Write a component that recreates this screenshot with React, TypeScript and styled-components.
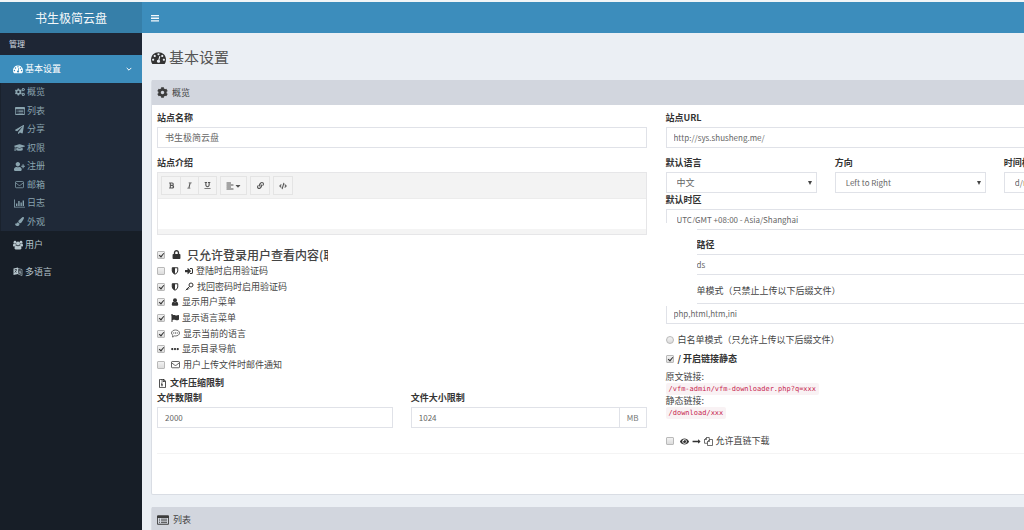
import React from 'react';
import styled, { createGlobalStyle, css } from 'styled-components';
import {
  FaAlignLeft, FaBold, FaCaretDown, FaCode, FaCog, FaCogs, FaEllipsisH, FaEye, FaFlag,
  FaGraduationCap, FaItalic, FaLink, FaLock, FaLongArrowAltRight, FaPaintBrush, FaPaperPlane,
  FaRegFileArchive, FaSignInAlt, FaUnderline, FaUserPlus,
} from 'react-icons/fa';

const Global = createGlobalStyle`
  *, *::before, *::after { box-sizing: border-box; }
  body {
    margin: 0;
    overflow-x: hidden;
    background: #ebeff4;
    color: #444;
    font-family: "Noto Sans CJK SC", "Noto Sans", sans-serif;
    font-size: 9px;
    line-height: 14px;
  }
  input, select, button { font: inherit; color: inherit; margin: 0; }
  svg { flex: none; display: block; }
`;

const Page = styled.div`
  display: grid;
  grid-template-columns: 142px minmax(0, 1fr);
  grid-template-rows: 31px 1fr;
  min-height: 100vh;
  overflow: hidden;
  border-top: 2px solid #f1f5f7;
`;

const Logo = styled.a`
  display: flex;
  align-items: center;
  justify-content: center;
  background: #367fa9;
  color: #f4f8fa;
  font-size: 12px;
  text-decoration: none;
`;

const TopBar = styled.header`
  display: flex;
  align-items: center;
  padding-left: 9px;
  background: #3c8dbc;
`;

const BarButton = styled.button`
  border: 0;
  padding: 0;
  background: none;
  color: #f4f9fc;
`;

const Sidebar = styled.aside`
  background: #171e27;
  color: #b8c7ce;
`;

const Section = styled.div`
  padding: 4px 9px 4px;
  background: #1e2635;
  color: #d2dae0;
  font-size: 8px;
`;

const NavItem = styled.a<{ $active?: boolean }>`
  display: flex;
  align-items: center;
  gap: 2px;
  height: 27px;
  padding: 0 10px 0 13px;
  color: inherit;
  text-decoration: none;
  ${(p) => p.$active && css`
    height: 28px;
    background: #3c8dbc;
    color: #fff;
    & > :last-child { margin-left: auto; }
  `}
`;

const SubMenu = styled.nav`
  display: grid;
  grid-auto-rows: 1fr;
  min-height: 148px;
  border-left: 1px solid #1a222d;
  background: #1f2938;
`;

const SubItem = styled.a`
  display: flex;
  align-items: center;
  padding-left: 13px;
  color: #8aa4af;
  text-decoration: none;
`;

const IconSlot = styled.span`
  display: flex;
  justify-content: center;
  width: 11px;
  margin-right: 2px;
`;

const Main = styled.main`
  padding: 14px 0 0 9px;
  margin-right: -139px;
`;

const Title = styled.h1`
  display: flex;
  align-items: center;
  gap: 3px;
  margin: 0 0 13px;
  font-size: 15px;
  font-weight: 400;
  line-height: 20px;
  color: #555;
  & svg { color: #333; }
`;

const Box = styled.section`
  margin-bottom: 12px;
  border: 1px solid #d9dde4;
  border-top: 0;
  border-radius: 2px;
  background: #fff;
`;

const BoxHead = styled.h2`
  display: flex;
  align-items: center;
  gap: 4px;
  height: 25px;
  margin: 0;
  padding-left: 5px;
  background: #d2d6de;
  font-size: 9px;
  font-weight: 400;
  & svg { color: #3c3c3c; }
`;

const Columns = styled.div`
  display: grid;
  grid-template-columns: 1fr 1fr;
  gap: 19px;
  margin: 0 7px 0 5px;
  padding-top: 6px;
  min-height: 349px;
  border-bottom: 1px solid #f4f4f4;
`;

const BoxFoot = styled.div`
  height: 40px;
`;

const Column = styled.div`
  position: relative;
`;

const Split = styled.div<{ $count: number }>`
  display: grid;
  grid-template-columns: repeat(${(p) => p.$count}, minmax(0, 1fr));
  gap: 18px;
`;

const Group = styled.div<{ $tight?: boolean }>`
  margin-bottom: ${(p) => (p.$tight ? 0 : 8)}px;
`;

const Label = styled.label<{ $inset?: boolean }>`
  display: block;
  margin-bottom: 2px;
  padding-left: ${(p) => (p.$inset ? 31 : 0)}px;
  color: #333;
  font-weight: 700;
`;

const field = css<{ $cjk?: boolean }>`
  display: block;
  width: 100%;
  height: 21px;
  border: 1px solid #e0e2e8;
  border-radius: 0;
  background-color: #fff;
  color: #666;
  outline: 0;
  font-size: ${(p) => (p.$cjk ? 9 : 8)}px;
`;

const Input = styled.input<{ $inset?: boolean; $cjk?: boolean }>`
  ${field}
  padding: 0 7px 0 ${(p) => (p.$inset ? 30 : 7)}px;
`;

const Select = styled.select<{ $cjk?: boolean }>`
  ${field}
  appearance: none;
  padding: 0 12px 0 10px;
  background-image: url("data:image/svg+xml,%3Csvg xmlns='http://www.w3.org/2000/svg' width='4' height='4'%3E%3Cpath d='M0 0h4L2 4z' fill='%23444'/%3E%3C/svg%3E");
  background-repeat: no-repeat;
  background-position: right 4px center;
`;

const AddonRow = styled.div`
  display: flex;
`;

const Addon = styled.span`
  display: flex;
  align-items: center;
  padding: 0 7px;
  border: 1px solid #e0e2e8;
  border-left: 0;
  color: #777;
  font-size: 8px;
`;

const Editor = styled.div`
  height: 63px;
  margin-bottom: 12px;
  display: flex;
  flex-direction: column;
  border: 1px solid #e6e6e8;
`;

const Tools = styled.div`
  display: flex;
  gap: 3px;
  padding: 3px;
  border-bottom: 1px solid #ececec;
  background: #f3f3f3;
`;

const ToolGroup = styled.div`
  display: flex;
  border: 1px solid #e4e4e4;
`;

const Tool = styled.button<{ $wide?: boolean }>`
  display: flex;
  align-items: center;
  justify-content: center;
  width: ${(p) => (p.$wide ? 25 : 18)}px;
  height: 17px;
  padding: 0;
  border: 0;
  background: #f4f4f4;
  color: #555;
  & + & { border-left: 1px solid #e4e4e4; }
`;

const EditArea = styled.div`
  flex: 1;
  outline: 0;
`;

const StatusBar = styled.div`
  height: 5px;
  background: #f4f4f4;
`;

const Options = styled.div`
  display: flex;
  flex-direction: column;
  justify-content: space-between;
  min-height: 108px;
  margin: 2px 0 4px;
`;

const Option = styled.label<{ $gap?: number; $bold?: boolean }>`
  display: flex;
  align-items: center;
  gap: 3px;
  line-height: 14px;
  color: ${(p) => (p.$bold ? '#333' : '#444')};
  font-weight: ${(p) => (p.$bold ? 700 : 400)};
  & > input { margin-right: ${(p) => p.$gap ?? 3}px; }
  & > svg { color: #333; }
`;

const Lead = styled(Option)`
  gap: 6px;
  height: 15px;
  font-size: 12px;
  font-weight: 500;
  color: #444;
`;

const LeadText = styled.span`
  width: 141px;
  overflow: hidden;
  white-space: nowrap;
`;

const Check = styled.input`
  appearance: none;
  flex: none;
  position: relative;
  width: 8px;
  height: 8px;
  border: 1px solid #b9b9b9;
  border-radius: ${(p) => (p.type === 'radio' ? 4 : 1)}px;
  background: linear-gradient(#f2f2f2, #dcdcdc);
  &:checked::after {
    content: '';
    position: absolute;
    left: 2px;
    top: 0;
    width: 3px;
    height: 5px;
    border: solid #333;
    border-width: 0 1px 1px 0;
    transform: rotate(40deg);
  }
`;

const ModeRow = styled(Option)<{ $inset?: boolean }>`
  margin: 9px 0 5px;
  padding-left: ${(p) => (p.$inset ? 31 : 0)}px;
`;

const StaticRow = styled(Option)`
  margin: 4px 0 5px;
`;

const Line = styled.div`
  line-height: 12px;
`;

const Code = styled.code`
  display: inline-block;
  vertical-align: top;
  padding: 0 3px;
  border-radius: 2px;
  background: #f9f2f4;
  color: #c7254e;
  font-family: "DejaVu Sans Mono", monospace;
  font-size: 7px;
  line-height: 12px;
`;

const SubHead = styled.div`
  display: flex;
  align-items: center;
  gap: 3px;
  padding-left: 1px;
  margin-bottom: 1px;
  color: #333;
  font-weight: 700;
`;

const Mask = styled.div`
  position: absolute;
  left: 0;
  top: 112px;
  width: 31px;
  height: 83px;
  background: #fff;
`;

const DirectRow = styled(Option)`
  margin-top: 15px;
`;

type IconProps = { size?: number };

const DashboardIcon = ({ size = 10 }: IconProps) => (
  <svg width={size} height={size} viewBox="0 0 1792 1792" fill="currentColor" aria-hidden="true">
    <path d="M384 1152q0-53-37.500-90.500t-90.500-37.500-90.500 37.500-37.500 90.500 37.500 90.500 90.500 37.500 90.500-37.500 37.500-90.500zm192-448q0-53-37.500-90.500t-90.500-37.500-90.500 37.500-37.500 90.500 37.500 90.500 90.500 37.500 90.500-37.500 37.500-90.500zm428 481l101-382q6-26-7.500-48.500t-38.500-29.500-48 6.500-30 39.500l-101 382q-60 5-107 43.500t-63 98.500q-20 77 20 146t117 89 146-20 89-117q16-60-6-117t-72-91zm660-33q0-53-37.500-90.500t-90.500-37.500-90.500 37.500-37.500 90.500 37.500 90.500 90.500 37.500 90.500-37.500 37.500-90.500zm-640-640q0-53-37.500-90.500t-90.500-37.500-90.500 37.500-37.500 90.500 37.500 90.500 90.500 37.500 90.500-37.500 37.500-90.500zm448 192q0-53-37.500-90.500t-90.500-37.500-90.500 37.500-37.500 90.500 37.500 90.500 90.500 37.500 90.500-37.500 37.500-90.500zm320 448q0 261-141 483-19 29-54 29h-1402q-35 0-54-29-141-221-141-483 0-182 71-348t191-286 286-191 348-71 348 71 286 191 191 286 71 348z" />
  </svg>
);

const ListIcon = ({ size = 10 }: IconProps) => (
  <svg width={size} height={size} viewBox="0 0 18 16" fill="currentColor" aria-hidden="true">
    <path fillRule="evenodd" d="M1.500 1h15A1.500 1.500 0 0 1 18 2.500v11a1.500 1.500 0 0 1-1.500 1.500h-15A1.500 1.500 0 0 1 0 13.500v-11A1.500 1.500 0 0 1 1.500 1zM1.300 5v8.500h15.400V5z" />
    <path d="M3 6h1.500v1.300H3zM6 6h9v1.300H6zM3 8.600h1.500v1.300H3zM6 8.600h9v1.300H6zM3 11.200h1.500v1.300H3zM6 11.200h9v1.300H6z" />
  </svg>
);

const BarsIcon = () => (
  <svg width="8" height="8" viewBox="0 0 8 8" fill="currentColor" aria-hidden="true">
    <path d="M0 1h8v1.300H0zM0 3.600h8v1.300H0zM0 6.200h8v1.300H0z" />
  </svg>
);

const ChevronIcon = () => (
  <svg width="6" height="6" viewBox="0 0 6 6" fill="none" stroke="currentColor" aria-hidden="true">
    <path d="M.7 1.900L3 4.200l2.300-2.300" />
  </svg>
);

const ChartIcon = () => (
  <svg width="11" height="9" viewBox="0 0 22 18" fill="currentColor" aria-hidden="true">
    <path d="M0 1h1.600v14.400H22V17H0zM4 9h2.700v5H4zM8.500 4h2.700v10H8.500zM13 7h2.700v7H13zM17.300 3H20v11h-2.700z" />
  </svg>
);

const MailIcon = () => (
  <svg width="9" height="9" viewBox="0 0 18 18" fill="none" stroke="currentColor" strokeWidth="1.500" aria-hidden="true">
    <rect x="1" y="3" width="16" height="12.500" rx="1.500" />
    <path d="M1.300 5.500l6 4.800q1.700 1.300 3.400 0l6-4.800" />
  </svg>
);

const UsersIcon = () => (
  <svg width="10" height="10" viewBox="0 0 20 20" fill="currentColor" aria-hidden="true">
    <circle cx="4" cy="4.500" r="2.800" />
    <circle cx="16" cy="4.500" r="2.800" />
    <circle cx="10" cy="7" r="3.900" />
    <path d="M0 11.500Q0 7 1.800 7q2 1.200 3.600.700 0 2.200 1.200 3.500-2 .1-3.200 1.600H1.500Q0 12.800 0 11.500zM20 11.500Q20 7 18.200 7q-2 1.200-3.600.700 0 2.200-1.200 3.500 2 .1 3.200 1.600h1.900q1.500 0 1.500-1.300z" />
    <path d="M3 16.500q0-5.500 3.300-5.500 3.700 2.500 7.400 0 3.300 0 3.300 5.500 0 2.300-2.400 2.300H5.400Q3 18.800 3 16.500z" />
  </svg>
);

const UserIcon = () => (
  <svg width="8" height="8" viewBox="0 0 16 16" fill="currentColor" aria-hidden="true">
    <circle cx="8" cy="4.500" r="4" />
    <path d="M1.500 13q0-5.500 3.300-5.500 3.200 2.300 6.400 0 3.300 0 3.300 5.500 0 2.500-2.400 2.500H3.900Q1.500 15.500 1.500 13z" />
  </svg>
);

const ShieldIcon = () => (
  <svg width="8" height="8" viewBox="0 0 16 16" aria-hidden="true">
    <path d="M2.500 1.500h11V8q0 3.800-5.500 6.500Q2.500 11.800 2.500 8z" fill="none" stroke="currentColor" strokeWidth="2" />
    <path d="M2.500 1.500H8v13Q2.500 11.800 2.500 8z" fill="currentColor" />
  </svg>
);

const KeyIcon = () => (
  <svg width="9" height="9" viewBox="0 0 18 18" fill="none" stroke="currentColor" strokeWidth="2" aria-hidden="true">
    <circle cx="12" cy="6" r="4" />
    <path d="M9 9l-7.500 7.500M4 13.500l2.500 2.500M6.500 11.500l2 2" />
  </svg>
);

const CommentIcon = () => (
  <svg width="9" height="9" viewBox="0 0 18 18" aria-hidden="true">
    <path d="M9 2c4.500 0 8 2.600 8 6s-3.500 6-8 6q-1 0-2-.200Q5 15.800 2.500 16q1.300-1.300 1.500-3.200Q1 11 1 8c0-3.400 3.500-6 8-6z" fill="none" stroke="currentColor" strokeWidth="1.400" />
    <path d="M4.500 7h2v2h-2zM8 7h2v2H8zM11.500 7h2v2h-2z" fill="currentColor" />
  </svg>
);

const CopyIcon = () => (
  <svg width="9" height="9" viewBox="0 0 18 18" fill="none" stroke="currentColor" strokeWidth="1.400" aria-hidden="true">
    <path d="M7 12.500H1V5l4-4h5.500v4M5 1v4H1" />
    <path d="M7 9l4-4h6v12H7zM11 5v4H7" />
  </svg>
);

const LanguageIcon = () => (
  <svg width="10" height="9" viewBox="0 0 20 18" aria-hidden="true">
    <path d="M1 3l9-2v13l-9 2z" fill="currentColor" />
    <path d="M10 3l8 2v12l-8-3z" fill="none" stroke="currentColor" strokeWidth="1.300" />
    <path d="M3 6l5-1M5.500 4v2M3 11c2-1 4-3 4-5M4 8l3 3" fill="none" stroke="#171e27" strokeWidth="1.200" />
    <path d="M12 13l2-6 2 7M13 12h2" fill="none" stroke="currentColor" strokeWidth="1.300" />
  </svg>
);

const subItems: [React.ReactNode, string][] = [
  [<FaCogs size={10} />, '概览'],
  [<ListIcon size={10} />, '列表'],
  [<FaPaperPlane size={9} />, '分享'],
  [<FaGraduationCap size={11} />, '权限'],
  [<FaUserPlus size={11} />, '注册'],
  [<MailIcon />, '邮箱'],
  [<ChartIcon />, '日志'],
  [<FaPaintBrush size={9} />, '外观'],
];

const options: { on: boolean; icons: React.ReactNode; text: string }[] = [
  { on: false, icons: <><ShieldIcon /><span /><FaSignInAlt size={8} /></>, text: '登陆时启用验证码' },
  { on: true, icons: <><ShieldIcon /><span /><KeyIcon /></>, text: '找回密码时启用验证码' },
  { on: true, icons: <UserIcon />, text: '显示用户菜单' },
  { on: true, icons: <FaFlag size={8} />, text: '显示语言菜单' },
  { on: true, icons: <CommentIcon />, text: '显示当前的语言' },
  { on: true, icons: <FaEllipsisH size={8} />, text: '显示目录导航' },
  { on: false, icons: <MailIcon />, text: '用户上传文件时邮件通知' },
];

export default function App() {
  return (
    <>
      <Global />
      <Page>
        <Logo href="#">书生极简云盘</Logo>
        <TopBar>
          <BarButton type="button" aria-label="切换菜单"><BarsIcon /></BarButton>
        </TopBar>
        <Sidebar>
          <Section>管理</Section>
          <NavItem href="#" $active><DashboardIcon />基本设置<ChevronIcon /></NavItem>
          <SubMenu>
            {subItems.map(([icon, text]) => (
              <SubItem href="#" key={text}><IconSlot>{icon}</IconSlot>{text}</SubItem>
            ))}
          </SubMenu>
          <NavItem href="#"><UsersIcon />用户</NavItem>
          <NavItem href="#"><LanguageIcon />多语言</NavItem>
        </Sidebar>
        <Main>
          <Title><DashboardIcon size={15} />基本设置</Title>
          <Box>
            <BoxHead><FaCog size={11} />概览</BoxHead>
            <Columns>
              <Column>
                <Group>
                  <Label htmlFor="name">站点名称</Label>
                  <Input id="name" $cjk defaultValue="书生极简云盘" />
                </Group>
                <Label as="div" id="intro">站点介绍</Label>
                <Editor>
                  <Tools>
                    <ToolGroup>
                      <Tool type="button" aria-label="粗体"><FaBold size={7} /></Tool>
                      <Tool type="button" aria-label="斜体"><FaItalic size={7} /></Tool>
                      <Tool type="button" aria-label="下划线"><FaUnderline size={7} /></Tool>
                    </ToolGroup>
                    <ToolGroup>
                      <Tool type="button" $wide aria-label="对齐"><FaAlignLeft size={8} /><FaCaretDown size={8} /></Tool>
                    </ToolGroup>
                    <ToolGroup><Tool type="button" aria-label="链接"><FaLink size={7} /></Tool></ToolGroup>
                    <ToolGroup><Tool type="button" aria-label="源码"><FaCode size={8} /></Tool></ToolGroup>
                  </Tools>
                  <EditArea contentEditable suppressContentEditableWarning role="textbox" aria-labelledby="intro" />
                  <StatusBar />
                </Editor>
                <Lead $gap={1}>
                  <Check type="checkbox" defaultChecked />
                  <FaLock size={9} />
                  <LeadText>只允许登录用户查看内容(取</LeadText>
                </Lead>
                <Options>
                  {options.map((o) => (
                    <Option key={o.text}>
                      <Check type="checkbox" defaultChecked={o.on} />
                      {o.icons}
                      {o.text}
                    </Option>
                  ))}
                </Options>
                <SubHead><FaRegFileArchive size={9} />文件压缩限制</SubHead>
                <Split $count={2}>
                  <div>
                    <Label htmlFor="count">文件数限制</Label>
                    <Input id="count" defaultValue="2000" />
                  </div>
                  <div>
                    <Label htmlFor="size">文件大小限制</Label>
                    <AddonRow>
                      <Input id="size" defaultValue="1024" />
                      <Addon>MB</Addon>
                    </AddonRow>
                  </div>
                </Split>
              </Column>
              <Column>
                <Group>
                  <Label htmlFor="url">站点URL</Label>
                  <Input id="url" defaultValue="http://sys.shusheng.me/" />
                </Group>
                <Split $count={3}>
                  <div>
                    <Label htmlFor="lang">默认语言</Label>
                    <Select id="lang" $cjk><option>中文</option></Select>
                  </div>
                  <div>
                    <Label htmlFor="dir">方向</Label>
                    <Select id="dir"><option>Left to Right</option></Select>
                  </div>
                  <div>
                    <Label htmlFor="time">时间格式</Label>
                    <Select id="time"><option>d/m/Y</option></Select>
                  </div>
                </Split>
                <Group>
                  <Label htmlFor="zone">默认时区</Label>
                  <Select id="zone"><option>UTC/GMT +08:00 - Asia/Shanghai</option></Select>
                </Group>
                <Group $tight>
                  <Label htmlFor="path" $inset>路径</Label>
                  <Input id="path" $inset defaultValue="ds" />
                </Group>
                <ModeRow as="label" htmlFor="deny" $inset>单模式（只禁止上传以下后缀文件）</ModeRow>
                <Input id="deny" defaultValue="php,html,htm,ini" />
                <ModeRow $gap={1}>
                  <Check type="radio" name="mode" />
                  白名单模式（只允许上传以下后缀文件）
                </ModeRow>
                <StaticRow $gap={1} $bold>
                  <Check type="checkbox" defaultChecked />
                  / 开启链接静态
                </StaticRow>
                <Line>原文链接:</Line>
                <Line><Code>/vfm-admin/vfm-downloader.php?q=xxx</Code></Line>
                <Line>静态链接:</Line>
                <Line><Code>/download/xxx</Code></Line>
                <DirectRow>
                  <Check type="checkbox" />
                  <FaEye size={9} />
                  <FaLongArrowAltRight size={9} />
                  <CopyIcon />
                  允许直链下载
                </DirectRow>
                <Mask />
              </Column>
            </Columns>
            <BoxFoot />
          </Box>
          <Box>
            <BoxHead><ListIcon size={12} />列表</BoxHead>
          </Box>
        </Main>
      </Page>
    </>
  );
}
